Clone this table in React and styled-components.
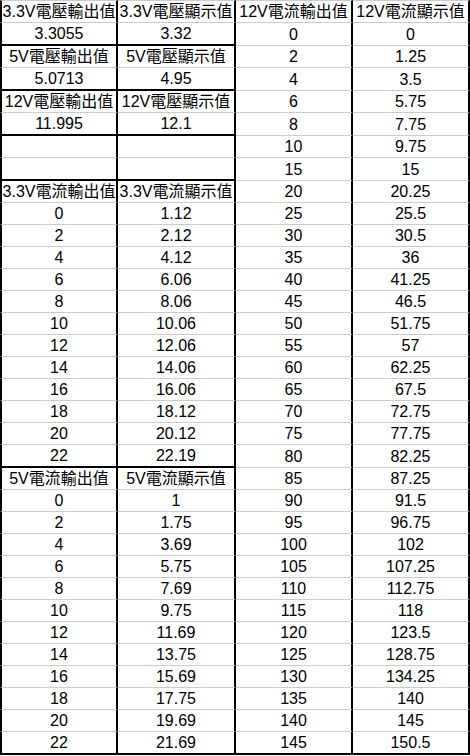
import React from 'react';
import styled, { createGlobalStyle } from 'styled-components';

const GlobalStyle = createGlobalStyle`
  html, body {
    margin: 0;
    padding: 0;
    background: #ffffff;
  }
  body {
    font-family: "Liberation Sans", "Noto Sans CJK TC", sans-serif;
    color: #000;
  }
`;

const Sheet = styled.table`
  width: 470px;
  table-layout: fixed;
  border-collapse: separate;
  border-spacing: 0;
`;

const Col = styled.col`
  width: ${(p) => p.$w}px;
`;

const Cell = styled.td`
  height: 21px;
  padding: 0;
  text-align: center;
  vertical-align: bottom;
  font-size: 16px;
  line-height: 20px;
  white-space: nowrap;
  overflow: hidden;
  border-right: 2px solid #000;
  border-bottom: ${(p) => (p.$thick ? '2px solid #000' : '1px solid #cccccc')};
  border-top: ${(p) => (p.$first ? '1px solid #cccccc' : 'none')};
  border-left: ${(p) => (p.$edge ? '2px solid #000' : 'none')};
`;

const left = [
  ['3.3V電壓輸出值', '3.3V電壓顯示值'],
  ['3.3055', '3.32'],
  ['5V電壓輸出值', '5V電壓顯示值'],
  ['5.0713', '4.95'],
  ['12V電壓輸出值', '12V電壓顯示值'],
  ['11.995', '12.1'],
  ['', ''],
  ['', ''],
  ['3.3V電流輸出值', '3.3V電流顯示值'],
  ['0', '1.12'],
  ['2', '2.12'],
  ['4', '4.12'],
  ['6', '6.06'],
  ['8', '8.06'],
  ['10', '10.06'],
  ['12', '12.06'],
  ['14', '14.06'],
  ['16', '16.06'],
  ['18', '18.12'],
  ['20', '20.12'],
  ['22', '22.19'],
  ['5V電流輸出值', '5V電流顯示值'],
  ['0', '1'],
  ['2', '1.75'],
  ['4', '3.69'],
  ['6', '5.75'],
  ['8', '7.69'],
  ['10', '9.75'],
  ['12', '11.69'],
  ['14', '13.75'],
  ['16', '15.69'],
  ['18', '17.75'],
  ['20', '19.69'],
  ['22', '21.69'],
];

const right = [
  ['12V電流輸出值', '12V電流顯示值'],
  ['0', '0'],
  ['2', '1.25'],
  ['4', '3.5'],
  ['6', '5.75'],
  ['8', '7.75'],
  ['10', '9.75'],
  ['15', '15'],
  ['20', '20.25'],
  ['25', '25.5'],
  ['30', '30.5'],
  ['35', '36'],
  ['40', '41.25'],
  ['45', '46.5'],
  ['50', '51.75'],
  ['55', '57'],
  ['60', '62.25'],
  ['65', '67.5'],
  ['70', '72.75'],
  ['75', '77.75'],
  ['80', '82.25'],
  ['85', '87.25'],
  ['90', '91.5'],
  ['95', '96.75'],
  ['100', '102'],
  ['105', '107.25'],
  ['110', '112.75'],
  ['115', '118'],
  ['120', '123.5'],
  ['125', '128.75'],
  ['130', '134.25'],
  ['135', '140'],
  ['140', '145'],
  ['145', '150.5'],
];

// rows whose bottom edge is a heavy line in the left block
const leftThick = [1, 3, 5, 7, 20, 33];

export default function App() {
  const last = left.length - 1;
  return (
    <>
      <GlobalStyle />
      <Sheet>
        <colgroup>
          <Col $w={118} />
          <Col $w={118} />
          <Col $w={117} />
          <Col $w={117} />
        </colgroup>
        <tbody>
          {left.map((row, i) => {
            const lt = leftThick.includes(i);
            const rt = i === last;
            return (
              <tr key={i}>
                <Cell $edge $first={i === 0} $thick={lt}>{row[0]}</Cell>
                <Cell $first={i === 0} $thick={lt}>{row[1]}</Cell>
                <Cell $first={i === 0} $thick={rt}>{right[i][0]}</Cell>
                <Cell $first={i === 0} $thick={rt}>{right[i][1]}</Cell>
              </tr>
            );
          })}
        </tbody>
      </Sheet>
    </>
  );
}
